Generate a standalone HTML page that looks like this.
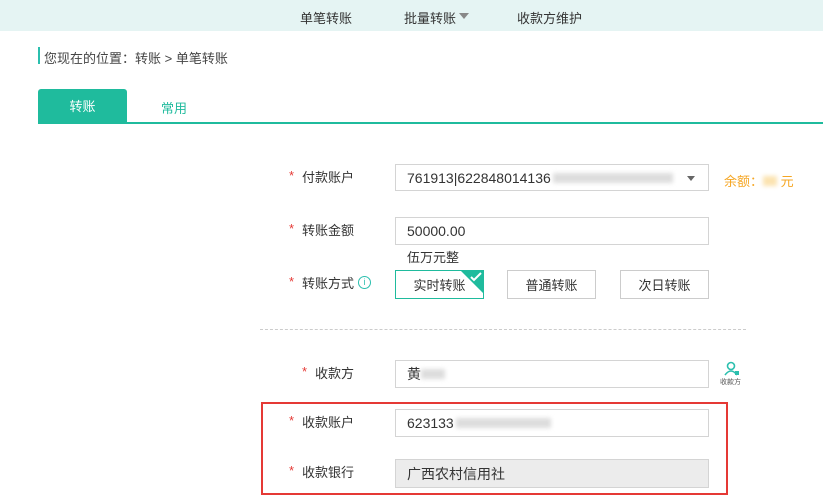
<!DOCTYPE html>
<html><head><meta charset="utf-8">
<style>
*{margin:0;padding:0;box-sizing:border-box}
body{width:823px;height:500px;overflow:hidden;background:#fff;position:relative;font-family:"Liberation Sans","Noto Sans CJK SC",sans-serif;font-size:13px;color:#333}
.a{position:absolute;white-space:nowrap}
.inp{position:absolute;left:395px;width:314px;border:1px solid #d4d4d4;background:#fff;padding-left:11px;font-size:14px;color:#333;display:flex;align-items:center}
.star{color:#e53935;position:absolute}
.btn{position:absolute;top:270px;width:89px;height:29px;border:1px solid #ccc;display:flex;align-items:center;justify-content:center;font-size:13px}
.blur{display:inline-block;background:#ddd;filter:blur(2px);height:10px}
</style></head><body>
<div class="a" style="left:0;top:0;width:823px;height:31px;background:#e5f4f3"></div>
<div class="a" style="left:300px;top:8px">单笔转账</div>
<div class="a" style="left:404px;top:8px">批量转账</div>
<div class="a" style="left:459px;top:13px;width:0;height:0;border-left:5px solid transparent;border-right:5px solid transparent;border-top:6px solid #888"></div>
<div class="a" style="left:517px;top:8px">收款方维护</div>

<div class="a" style="left:38px;top:47px;width:2px;height:17px;background:#2bbfae"></div>
<div class="a" style="left:44px;top:48px;color:#444">您现在的位置：转账 &gt; 单笔转账</div>

<div class="a" style="left:38px;top:89px;width:89px;height:34px;background:#1fbb9d;border-radius:3px 3px 0 0;color:#fff;text-align:center;line-height:36px">转账</div>
<div class="a" style="left:161px;top:98px;color:#1fbb9d">常用</div>
<div class="a" style="left:38px;top:122px;width:785px;height:2px;background:#1fbb9d"></div>

<span class="a star" style="left:289px;top:168px">*</span>
<div class="a" style="left:302px;top:167px">付款账户</div>
<div class="inp" style="top:164px;height:27px">761913|622848014136<span class="blur" style="width:120px;margin-left:2px"></span></div>
<div class="a" style="left:687px;top:176px;border-left:4px solid transparent;border-right:4px solid transparent;border-top:5px solid #666"></div>
<div class="a" style="left:724px;top:171px;color:#f5a623">余额：<span class="blur" style="width:14px;background:#fbe3b0"></span> 元</div>

<span class="a star" style="left:289px;top:221px">*</span>
<div class="a" style="left:302px;top:220px">转账金额</div>
<div class="inp" style="top:217px;height:28px">50000.00</div>
<div class="a" style="left:407px;top:247px">伍万元整</div>

<span class="a star" style="left:289px;top:274px">*</span>
<div class="a" style="left:302px;top:273px">转账方式</div>
<div class="a" style="left:358px;top:276px;width:13px;height:13px;border:1px solid #2bbfae;border-radius:50%;color:#2bbfae;font-size:9px;text-align:center;line-height:11px">i</div>
<div class="btn" style="left:395px;border-color:#1fbb9d">实时转账</div>
<div class="a" style="left:460px;top:270px;width:0;height:0;border-left:24px solid transparent;border-top:24px solid #1fbb9d"></div>
<svg class="a" style="left:469px;top:271px" width="14" height="12"><path d="M2 6 L5 9 L12 2" stroke="#fff" stroke-width="2" fill="none"/></svg>
<div class="btn" style="left:507px">普通转账</div>
<div class="btn" style="left:620px">次日转账</div>

<div class="a" style="left:260px;top:329px;width:486px;border-top:1px dashed #ccc"></div>

<span class="a star" style="left:302px;top:364px">*</span>
<div class="a" style="left:315px;top:363px">收款方</div>
<div class="inp" style="top:360px;height:28px">黄<span class="blur" style="width:24px"></span></div>
<svg class="a" style="left:724px;top:361px" width="16" height="15"><circle cx="7" cy="5" r="3.5" stroke="#2bbfae" stroke-width="1.6" fill="none"/><path d="M1 14 Q7 6 13 14" stroke="#2bbfae" stroke-width="1.6" fill="none"/><rect x="11" y="10" width="4" height="4" fill="#2bbfae"/></svg>
<div class="a" style="left:720px;top:377px;font-size:7px;color:#555">收款方</div>

<div class="a" style="left:261px;top:402px;width:467px;height:93px;border:2px solid #e53935"></div>
<span class="a star" style="left:289px;top:413px">*</span>
<div class="a" style="left:302px;top:412px">收款账户</div>
<div class="inp" style="top:409px;height:28px">623133<span class="blur" style="width:95px;margin-left:2px"></span></div>
<span class="a star" style="left:289px;top:463px">*</span>
<div class="a" style="left:302px;top:462px">收款银行</div>
<div class="inp" style="top:459px;height:29px;background:#ececec">广西农村信用社</div>
</body></html>
